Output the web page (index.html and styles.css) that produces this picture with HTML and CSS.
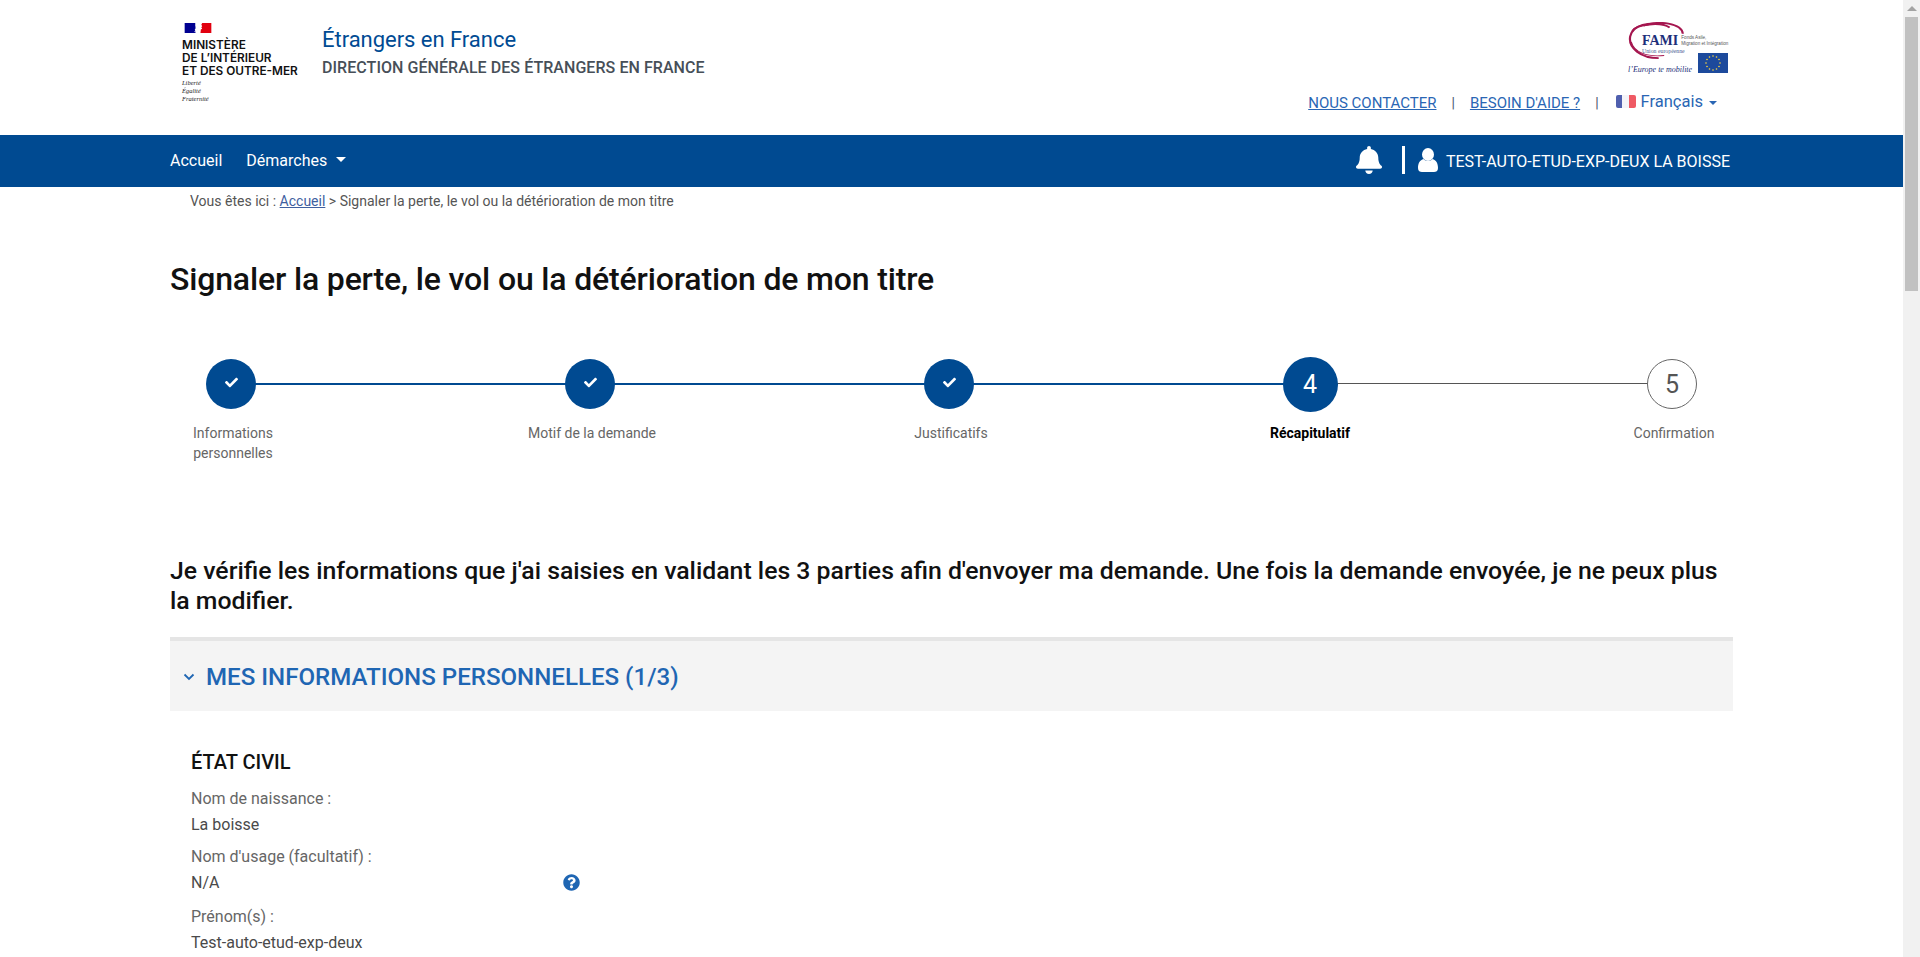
FILE: index.html
```html
<!DOCTYPE html>
<html lang="fr">
<head>
<meta charset="utf-8">
<title>Étrangers en France</title>
<link rel="stylesheet" href="styles.css">
</head>
<body>
<div class="page">
  <header class="top">
    <div class="marianne">
      <svg class="mflag" width="32" height="12" viewBox="0 0 32 12"><rect width="13" height="12" fill="#000091"/><rect x="19" width="13" height="12" fill="#e1000f"/><path d="M13 0h8l-1 2 1 2-1 1 1 2-2 1v2l-2 2h-4l2-1-1-1-3 1 2-2-1-1 3-3-2-1z" fill="#fff"/></svg>
      <div class="mname">MINISTÈRE<br>DE L’INTÉRIEUR<br>ET DES OUTRE-MER</div>
      <div class="motto">Liberté<br>Égalité<br>Fraternité</div>
    </div>
    <div class="site">
      <div class="site-name">Étrangers en France</div>
      <div class="site-sub">DIRECTION GÉNÉRALE DES ÉTRANGERS EN FRANCE</div>
    </div>
    <div class="top-right">
      <div class="fami">
        <svg class="fami-rings" width="57" height="38" viewBox="0 0 52 42" preserveAspectRatio="none"><g fill="none" stroke="#a5164f" stroke-width="2"><path d="M33 3C20-1 4 3 2 16c-2 13 10 24 26 24"/><path d="M14 4C28-2 49 1 50 13"/><path d="M4 10C8 2 30 0 38 6"/><path d="M3 22c2 11 14 17 30 15" stroke-width="1"/></g></svg>
        <div class="fami-main"><span class="fami-word">FAMI</span><span class="fami-fund">Fonds Asile,<br>Migration et Intégration</span></div>
        <div class="fami-ue">Union européenne</div>
        <div class="fami-bottom"><span class="fami-slogan">l’Europe te mobilite</span>
          <svg class="eu" width="30" height="20" viewBox="0 0 30 20"><rect width="30" height="20" fill="#1d4a9c"/><g fill="#ffd83a"><circle cx="15" cy="3" r=".8"/><circle cx="18.5" cy="4" r=".8"/><circle cx="21" cy="6.500" r=".8"/><circle cx="22" cy="10" r=".8"/><circle cx="21" cy="13.500" r=".8"/><circle cx="18.500" cy="16" r=".8"/><circle cx="15" cy="17" r=".8"/><circle cx="11.500" cy="16" r=".8"/><circle cx="9" cy="13.500" r=".8"/><circle cx="8" cy="10" r=".8"/><circle cx="9" cy="6.500" r=".8"/><circle cx="11.500" cy="4" r=".8"/></g></svg>
        </div>
      </div>
      <div class="links">
        <a href="#" class="tlink">NOUS CONTACTER</a><span class="sep">|</span><a href="#" class="tlink">BESOIN D'AIDE ?</a><span class="sep">|</span>
        <span class="lang"><span class="flag"><i class="fb"></i><i class="fw"></i><i class="fr"></i></span>Français<span class="caret caret-blue"></span></span>
      </div>
    </div>
  </header>

  <nav class="nav">
    <a href="#" class="nav-item">Accueil</a>
    <a href="#" class="nav-item">Démarches<span class="caret caret-white"></span></a>
    <div class="nav-right">
      <svg class="bell" width="26" height="28" viewBox="0 0 448 512" preserveAspectRatio="none"><path fill="#fff" d="M224 512c35.300 0 64-28.700 64-64H160c0 35.300 28.700 64 64 64zm215.400-149.700c-19.300-20.800-55.500-52-55.500-154.300 0-77.700-54.500-139.900-127.900-155.200V32c0-17.700-14.300-32-32-32s-32 14.300-32 32v20.800C118.600 68.100 64.100 130.300 64.100 208c0 102.300-36.200 133.500-55.500 154.300-6 6.500-8.700 14.200-8.600 21.700.1 16.400 13 32 32.100 32h383.800c19.100 0 32-15.600 32.100-32 .1-7.500-2.600-15.300-8.600-21.700z"/></svg>
      <span class="nav-div"></span>
      <svg class="user" width="20" height="24" viewBox="0 0 20 24"><ellipse cx="10" cy="6.500" rx="6" ry="6.500" fill="#fff"/><path fill="#fff" d="M0 20c0-5 2-8 5.500-9 1.500 2.500 7.500 2.500 9 0 3.500 1 5.500 4 5.500 9 0 3-2 4-4 4H4c-2 0-4-1-4-4z"/></svg>
      <span class="user-name">TEST-AUTO-ETUD-EXP-DEUX LA BOISSE</span>
    </div>
  </nav>

  <div class="crumb">Vous êtes ici : <a href="#">Accueil</a> &gt; Signaler la perte, le vol ou la détérioration de mon titre</div>

  <main class="content">
    <h1 class="title">Signaler la perte, le vol ou la détérioration de mon titre</h1>

    <ol class="steps">
      <li class="step done"><span class="dot"><svg width="13" height="13" viewBox="0 0 512 512"><path fill="#fff" d="M173.900 439.400l-166.400-166.400c-10-10-10-26.200 0-36.200l36.200-36.200c10-10 26.200-10 36.200 0L192 312.700 432.100 72.600c10-10 26.200-10 36.200 0l36.200 36.200c10 10 10 26.200 0 36.200l-294.400 294.400c-10 10-26.200 10-36.200 0z"/></svg></span><span class="label">Informations<br>personnelles</span></li>
      <li class="step done"><span class="dot"><svg width="13" height="13" viewBox="0 0 512 512"><path fill="#fff" d="M173.900 439.400l-166.400-166.400c-10-10-10-26.200 0-36.200l36.200-36.200c10-10 26.200-10 36.200 0L192 312.700 432.100 72.600c10-10 26.200-10 36.200 0l36.200 36.200c10 10 10 26.200 0 36.200l-294.400 294.400c-10 10-26.200 10-36.200 0z"/></svg></span><span class="label">Motif de la demande</span></li>
      <li class="step done"><span class="dot"><svg width="13" height="13" viewBox="0 0 512 512"><path fill="#fff" d="M173.900 439.400l-166.400-166.400c-10-10-10-26.200 0-36.200l36.200-36.200c10-10 26.200-10 36.200 0L192 312.700 432.100 72.600c10-10 26.200-10 36.200 0l36.200 36.200c10 10 10 26.200 0 36.200l-294.400 294.400c-10 10-26.200 10-36.200 0z"/></svg></span><span class="label">Justificatifs</span></li>
      <li class="step current"><span class="dot">4</span><span class="label">Récapitulatif</span></li>
      <li class="step todo"><span class="dot">5</span><span class="label">Confirmation</span></li>
    </ol>

    <h2 class="intro">Je vérifie les informations que j'ai saisies en validant les 3 parties afin d'envoyer ma demande. Une fois la demande envoyée, je ne peux plus la modifier.</h2>

    <section class="accordion">
      <div class="acc-head">
        <svg class="chev" width="12" height="8" viewBox="0 0 12 8"><path d="M1.500 1.500L6 6l4.500-4.500" fill="none" stroke="#1f66b3" stroke-width="1.800"/></svg>
        <span class="acc-title">MES INFORMATIONS PERSONNELLES (1/3)</span>
      </div>
      <div class="acc-body">
        <h3 class="sub">ÉTAT CIVIL</h3>
        <div class="field"><div class="f-label">Nom de naissance :</div><div class="f-value">La boisse</div></div>
        <div class="field field-help"><div class="f-label">Nom d'usage (facultatif) :</div><div class="f-value f-help">N/A
          <svg class="help" width="17" height="17" viewBox="0 0 512 512"><path fill="#1f66b3" d="M504 256c0 137-111 248-248 248S8 393 8 256 119 8 256 8s248 111 248 248zM262.700 90c-54.500 0-89.300 23-116.500 63.800-3.500 5.300-2.400 12.400 2.700 16.300l34.700 26.300c5.200 3.900 12.600 3 16.700-2.100 17.900-22.700 30.100-35.800 57.300-35.800 20.400 0 45.700 13.100 45.700 33 0 15-12.400 22.700-32.600 34-23.600 13.200-54.800 29.700-54.800 70.900V302c0 6.600 5.400 12 12 12h56c6.600 0 12-5.400 12-12v-1.300c0-28.600 83.500-29.800 83.500-107.200C378.400 135.200 317.900 90 262.700 90zM256 339.200c-25.500 0-46.200 20.700-46.200 46.200 0 25.500 20.700 46.200 46.200 46.200s46.200-20.700 46.200-46.200c0-25.500-20.700-46.200-46.200-46.200z"/></svg></div></div>
        <div class="field"><div class="f-label">Prénom(s) :</div><div class="f-value">Test-auto-etud-exp-deux</div></div>
      </div>
    </section>
  </main>
</div>
<div class="scrollbar" aria-hidden="true">
  <span class="sb-up"></span>
  <span class="sb-thumb"></span>
</div>
</body>
</html>
```
FILE: styles.css
```css
* { box-sizing: border-box; }
html, body { height: 100%; }
body {
  margin: 0;
  display: flex;
  height: 957px;
  overflow: hidden;
  background: #fff;
  font-family: Roboto, "Liberation Sans", sans-serif;
  font-size: 16px;
  color: #444;
}
a { color: #2a66b4; }
.page { flex: 1; min-width: 0; height: 957px; overflow: hidden; }

/* scrollbar */
.scrollbar { width: 17px; height: 957px; background: #f1f1f1; display: flex; flex-direction: column; align-items: center; flex: none; }
.sb-up { width: 17px; height: 17px; display: flex; align-items: center; justify-content: center; }
.sb-up::before { content: ""; border: 5px solid transparent; border-top: 0; border-bottom: 5px solid #a3a3a3; }
.sb-thumb { width: 13px; height: 274px; background: #c1c1c1; }

/* header */
.top { height: 135px; display: flex; padding: 23px 0 0 182px; }
.marianne { width: 116px; height: 80px; flex: none; display: flex; flex-direction: column; color: #000; }
.mflag { display: block; }
.mname { font-family: Inter, "Liberation Sans", sans-serif; font-weight: 600; font-size: 11.8px; line-height: 13px; margin-top: 6px; white-space: nowrap; color: #111; }
.motto { font-family: "Liberation Serif", serif; font-style: italic; font-size: 6.5px; line-height: 8px; margin-top: 1px; color: #222; }
.site { margin-left: 24px; padding-top: 3px; }
.site-name { font-size: 22px; line-height: 28px; color: #004b93; letter-spacing: -.03px; }
.site-sub { font-size: 16px; line-height: 20px; margin-top: 4px; font-weight: 500; color: #474f58; white-space: nowrap; letter-spacing: .06px; }
.top-right { margin-left: auto; flex: none; padding-right: 175px; display: flex; flex-direction: column; align-items: flex-end; margin-top: -1px; }
.fami { position: relative; width: 100px; height: 54px; color: #333; }
.fami-rings { position: absolute; left: 0; top: 0; }
.fami-main { position: absolute; left: 14px; top: 12px; display: flex; align-items: center; gap: 3px; white-space: nowrap; }
.fami-word { font-family: "Liberation Serif", serif; font-weight: 700; font-size: 14px; line-height: 14px; color: #1d2f7a; }
.fami-fund { font-family: "Liberation Sans", sans-serif; font-size: 4.6px; line-height: 6.5px; color: #555; }
.fami-ue { position: absolute; left: 14px; top: 26px; font-family: "Liberation Serif", serif; font-size: 5.8px; line-height: 6px; color: #4b5f95; white-space: nowrap; }
.fami-bottom { position: absolute; left: 0; top: 31px; width: 100px; display: flex; justify-content: space-between; align-items: flex-end; }
.fami-slogan { font-family: "Liberation Serif", serif; font-style: italic; font-size: 8px; line-height: 12px; margin-bottom: -3px; color: #1d2f7a; white-space: nowrap; }
.eu { display: block; }
.links { display: flex; align-items: center; height: 22px; margin: 16px 11px 0 0; font-size: 15px; white-space: nowrap; }
.tlink { color: #2a66b4; text-decoration: underline; font-size: 15px; }
.sep { color: #49566b; margin: 0 15px; font-size: 14px; }
.lang { display: flex; align-items: center; color: #2a66b4; font-size: 16.5px; margin-left: 2px; margin-top: -3px; }
.flag { display: flex; width: 20px; height: 13px; margin-right: 5px; border-radius: 2px; overflow: hidden; }
.flag i { flex: 1; display: block; }
.fb { background: #4f5fae; }
.fw { background: #f4f4f8; }
.fr { background: #ef5a64; }
.caret { display: inline-block; width: 0; height: 0; border-style: solid; border-width: 4px 4px 0; border-color: transparent; margin-left: 6px; vertical-align: middle; }
.caret-blue { border-top-color: #2a66b4; margin-top: 2px; }
.caret-white { border-top-color: #fff; margin-left: 9px; margin-top: -3px; border-width: 5px 5px 0; }

/* nav */
.nav { height: 52px; background: #004a91; display: flex; align-items: center; padding: 0 0 0 170px; color: #fff; }
.nav-item { color: #fff; text-decoration: none; margin-right: 24px; font-size: 16px; margin-top: -2px; }
.nav-right { margin-left: auto; display: flex; align-items: center; padding-right: 173px; }
.bell { display: block; margin-right: 20px; margin-top: -3px; }
.nav-div { width: 3px; height: 28px; background: #fff; margin-right: 13px; margin-top: -3px; }
.user { display: block; margin-right: 8px; margin-top: -3px; }
.user-name { font-size: 16px; white-space: nowrap; }

/* breadcrumb */
.crumb { padding: 4px 0 0 190px; font-size: 14px; line-height: 20px; color: #555; }
.crumb a { color: #3f5f9f; }

/* content */
.content { padding: 0 170px; }
.title { margin: 48px 0 0; font-size: 32px; line-height: 40px; font-weight: 500; color: #111; letter-spacing: -.155px; }

.steps { list-style: none; margin: 60px 0 0; padding: 0 0 0 11px; height: 197px; display: grid; grid-template-columns: 359px 359px 361px 362px 100px; }
.step { position: relative; width: 100px; display: flex; flex-direction: column; align-items: center; }
.step::after { content: ""; position: absolute; left: 50px; top: 24px; height: 2px; background: #004a91; }
.step:nth-child(1)::after { width: 359px; }
.step:nth-child(2)::after { width: 359px; }
.step:nth-child(3)::after { width: 361px; }
.step:nth-child(4)::after { width: 362px; height: 1px; background: #555; }
.step:nth-child(5)::after { display: none; }
.dot { position: relative; z-index: 1; width: 50px; height: 50px; border-radius: 50%; background: #004a91; display: flex; align-items: center; justify-content: center; color: #fff; }
.dot svg { display: block; margin-top: -4px; }
.current .dot { width: 55px; height: 55px; margin-top: -2px; font-size: 25px; margin-bottom: -3px; }
.todo .dot { background: #fff; border: 1px solid #666; color: #555; font-size: 25px; }
.label { margin-top: 14px; margin-left: 4px; width: max-content; text-align: center; font-size: 14px; line-height: 20px; color: #666; }
.current .label { color: #000; font-weight: 700; margin-left: 0; }

.intro { margin: 0; font-size: 24.8px; line-height: 30px; font-weight: 500; color: #111; }

.accordion { margin-top: 21px; }
.acc-head { height: 74px; background: #f4f4f4; border-top: 4px solid #e5e5e5; display: flex; align-items: center; padding: 2px 0 0 13px; }
.chev { display: block; margin-right: 11px; }
.acc-title { font-size: 24.1px; font-weight: 500; color: #1f66b3; white-space: nowrap; }
.acc-body { padding: 38px 0 0 21px; }
.sub { margin: 0 0 11px; font-size: 20px; line-height: 26px; font-weight: 500; color: #111; }
.field { margin-bottom: 7px; line-height: 25px; }
.field-help { margin-bottom: 9px; }
.f-label { color: #666; font-size: 16px; }
.f-value { color: #4a4a4a; font-size: 16px; margin-top: 1px; }
.f-help { display: flex; align-items: center; justify-content: space-between; width: 389px; }
.help { display: block; }
```
